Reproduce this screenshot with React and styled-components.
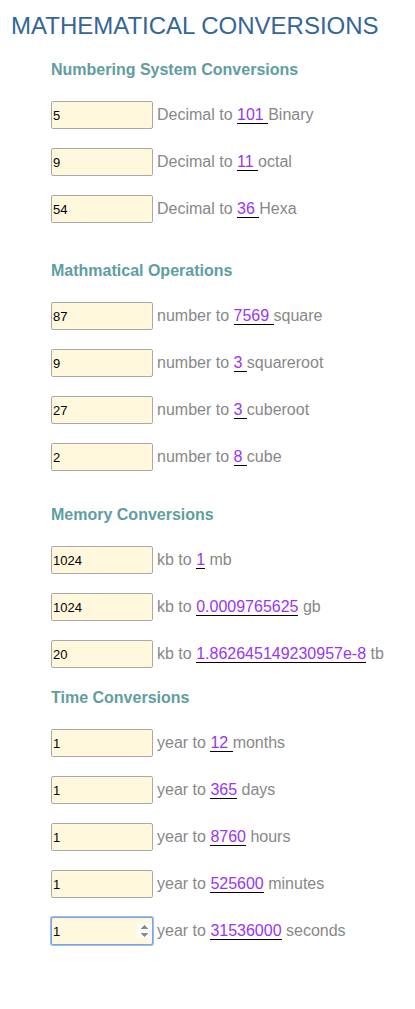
import React from "react";
import styled, { createGlobalStyle } from "styled-components";

const sections = [
  {
    title: "Numbering System Conversions",
    gap: 20,
    rows: [
      { value: "5", before: "Decimal to", result: "101", after: "Binary", space: true },
      { value: "9", before: "Decimal to", result: "11", after: "octal", space: true },
      { value: "54", before: "Decimal to", result: "36", after: "Hexa", space: true },
    ],
  },
  {
    title: "Mathmatical Operations",
    gap: 38,
    rows: [
      { value: "87", before: "number to", result: "7569", after: "square", space: true },
      { value: "9", before: "number to", result: "3", after: "squareroot", space: true },
      { value: "27", before: "number to", result: "3", after: "cuberoot", space: true },
      { value: "2", before: "number to", result: "8", after: "cube", space: true },
    ],
  },
  {
    title: "Memory Conversions",
    gap: 34,
    rows: [
      { value: "1024", before: "kb to", result: "1", after: "mb" },
      { value: "1024", before: "kb to", result: "0.0009765625", after: "gb" },
      { value: "20", before: "kb to", result: "1.862645149230957e-8", after: "tb" },
    ],
  },
  {
    title: "Time Conversions",
    gap: 20,
    rows: [
      { value: "1", before: "year to", result: "12", after: "months", space: true },
      { value: "1", before: "year to", result: "365", after: "days" },
      { value: "1", before: "year to", result: "8760", after: "hours" },
      { value: "1", before: "year to", result: "525600", after: "minutes" },
      { value: "1", before: "year to", result: "31536000", after: "seconds", focus: true },
    ],
  },
];

const GlobalStyle = createGlobalStyle`
  body {
    margin: 0;
    background: #fff;
    font-family: "Liberation Sans", Arial, sans-serif;
  }
`;

const Page = styled.div`
  padding: 12px 0 40px 11px;
`;

const Title = styled.h1`
  margin: 0;
  font-size: 24px;
  line-height: 28px;
  font-weight: normal;
  color: #336699;
`;

const Section = styled.section`
  padding-left: 40px;
  margin-top: ${(p) => p.gap}px;
`;

const Heading = styled.h3`
  margin: 0 0 21px;
  font-size: 16px;
  line-height: 20px;
  font-weight: bold;
  color: #5f9ea0;
`;

const Rows = styled.div`
  display: flex;
  flex-direction: column;
  gap: 19px;
`;

const Row = styled.div`
  display: flex;
  align-items: center;
  gap: 4px;
  white-space: nowrap;
`;

const Field = styled.input`
  box-sizing: border-box;
  width: 102px;
  height: 28px;
  padding: 0 0 0 1px;
  border: 1px solid #a9a9a9;
  border-radius: 2px;
  background: #fff8dc;
  font-family: "Liberation Sans", Arial, sans-serif;
  font-size: 13px;
  color: #000;

  &::-webkit-inner-spin-button,
  &::-webkit-outer-spin-button {
    opacity: ${(p) => (p.$active ? 1 : 0)};
  }

  &:focus {
    outline: none;
    border-color: #7ba4e6;
    box-shadow: 0 0 0 1px #9dbcf0;
  }
`;

const Label = styled.span`
  font-size: 16px;
  line-height: 20px;
  color: #888;
`;

const Result = styled.span`
  color: #9a35f0;
  border-bottom: 1px solid #000;
`;

export default function App() {
  return (
    <Page>
      <GlobalStyle />
      <Title>MATHEMATICAL CONVERSIONS</Title>
      {sections.map((s) => (
        <Section key={s.title} gap={s.gap}>
          <Heading>{s.title}</Heading>
          <Rows>
            {s.rows.map((r, i) => (
              <Row key={i}>
                <Field
                  type="number"
                  defaultValue={r.value}
                  autoFocus={r.focus}
                  $active={r.focus}
                />
                <Label>
                  {r.before}{" "}
                  <Result>{r.space ? r.result + " " : r.result}</Result>
                  {r.space ? "" : " "}
                  {r.after}
                </Label>
              </Row>
            ))}
          </Rows>
        </Section>
      ))}
    </Page>
  );
}
